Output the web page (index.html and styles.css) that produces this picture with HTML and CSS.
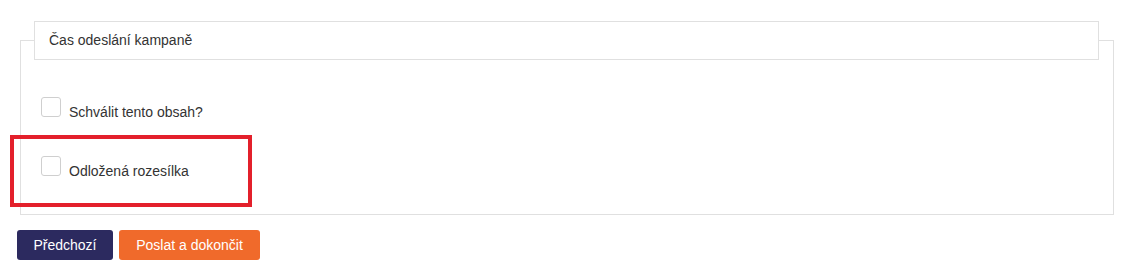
FILE: index.html
```html
<!DOCTYPE html>
<html lang="cs">
<head>
<meta charset="utf-8">
<title>Čas odeslání kampaně</title>
<link rel="stylesheet" href="styles.css">
</head>
<body>
<div class="page">
  <fieldset class="panel">
    <legend class="panel-title">Čas odeslání kampaně</legend>
    <label class="check-row">
      <span class="check-box"></span>
      <span class="check-label">Schválit tento obsah?</span>
    </label>
    <label class="check-row">
      <span class="check-box"></span>
      <span class="check-label">Odložená rozesílka</span>
    </label>
  </fieldset>
  <div class="actions">
    <button class="btn btn-prev" type="button">Předchozí</button>
    <button class="btn btn-send" type="button">Poslat a dokončit</button>
  </div>
  <div class="highlight"></div>
</div>
</body>
</html>
```

FILE: styles.css
```css
html, body {
  margin: 0;
  padding: 0;
  background: #fff;
}
body {
  font-family: "Liberation Sans", Arial, sans-serif;
  font-size: 14px;
  color: #333;
}
.page {
  position: relative;
  padding: 21px 0 0 17px;
  width: 1097px;
}
.panel {
  margin: 0 0 0 3px;
  padding: 0 14px 18px 13px;
  border: 1px solid #e0e0e0;
  width: 1065px;
  min-width: 0;
}
.panel-title {
  box-sizing: border-box;
  width: 100%;
  height: 39px;
  padding: 0 14px;
  border: 1px solid #e0e0e0;
  background: #fff;
  line-height: 37px;
  font-size: 14px;
  color: #333;
}
.check-row {
  display: flex;
  align-items: flex-start;
  gap: 8px;
  margin-left: 7px;
  height: 59px;
  cursor: pointer;
}
.check-row:first-of-type {
  margin-top: 37px;
}
.check-box {
  box-sizing: border-box;
  width: 20px;
  height: 20px;
  border: 1px solid #cfcfcf;
  border-radius: 3px;
  background: #fff;
  flex: none;
}
.check-label {
  padding-top: 7px;
  line-height: 16px;
}
.check-row:last-child {
  height: 40px;
}
.actions {
  display: flex;
  gap: 6px;
  margin-top: 15px;
}
.btn {
  height: 30px;
  border: none;
  border-radius: 3px;
  padding: 0;
  font-family: "Liberation Sans", Arial, sans-serif;
  font-size: 14px;
  color: #fff;
  cursor: pointer;
}
.btn-prev {
  background: #2c2a5f;
  width: 96px;
}
.btn-send {
  background: #f06a2b;
  width: 141px;
}
.highlight {
  position: absolute;
  left: 10px;
  top: 135px;
  width: 234px;
  height: 64px;
  border: 4px solid #e3202b;
}
```
